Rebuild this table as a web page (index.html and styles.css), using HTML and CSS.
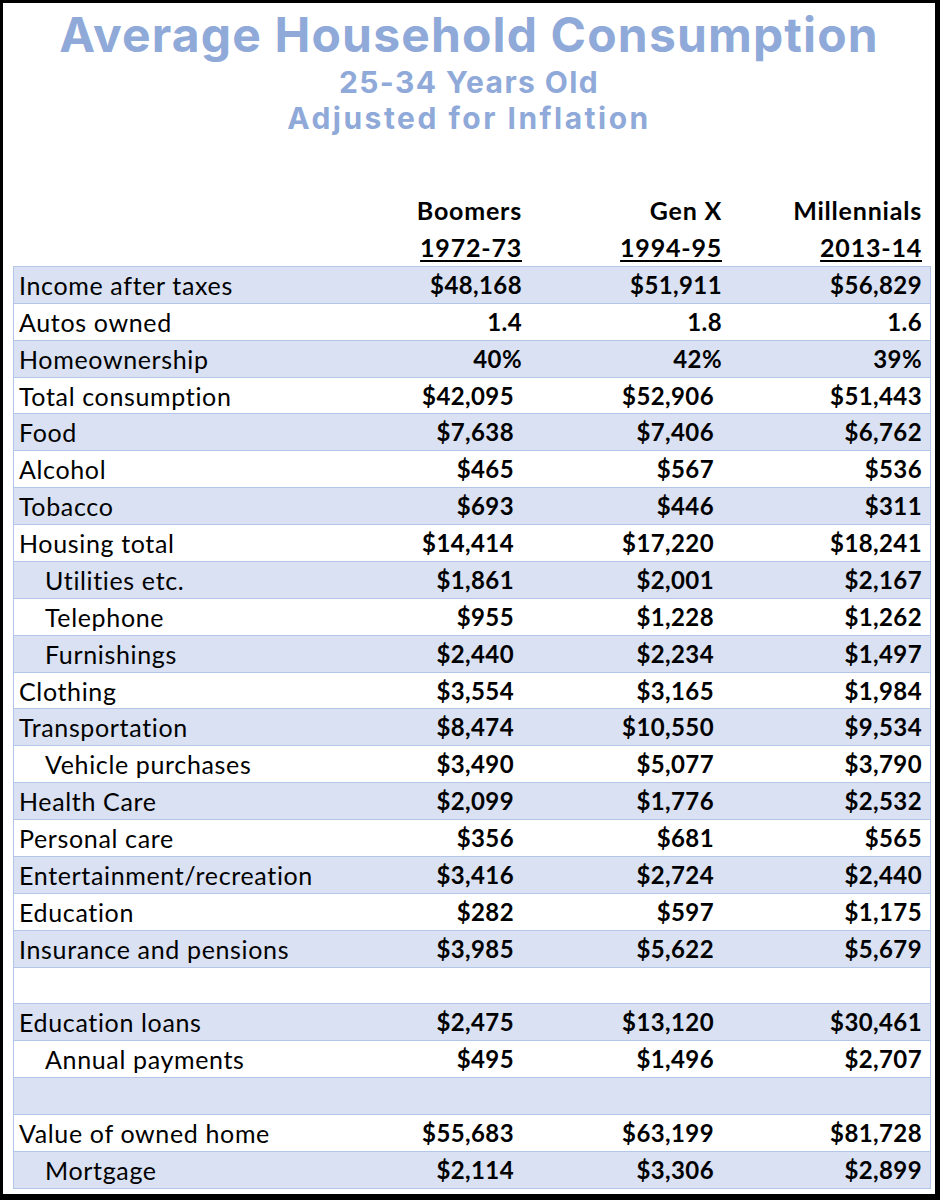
FILE: index.html
```html
<!DOCTYPE html>
<html>
<head>
<meta charset="utf-8">
<link rel="stylesheet" href="styles.css">
</head>
<body>
<div class="frame">
  <div class="titles">
    <div class="t1">Average Household Consumption</div>
    <div class="t2">25-34 Years Old</div>
    <div class="t3">Adjusted for Inflation</div>
  </div>
  <div class="heads">
    <div class="hrow">
      <div></div><div class="h">Boomers</div><div class="h">Gen X</div><div class="h">Millennials</div>
    </div>
    <div class="hrow">
      <div></div><div class="h u">1972-73</div><div class="h u">1994-95</div><div class="h u">2013-14</div>
    </div>
  </div>
  <div class="tbl">
    <div class="row b"><div class="l">Income after taxes</div><div class="v">$48,168</div><div class="v">$51,911</div><div class="v">$56,829</div></div>
    <div class="row"><div class="l">Autos owned</div><div class="v">1.4</div><div class="v">1.8</div><div class="v">1.6</div></div>
    <div class="row b"><div class="l">Homeownership</div><div class="v">40%</div><div class="v">42%</div><div class="v">39%</div></div>
    <div class="row a"><div class="l">Total consumption</div><div class="v">$42,095</div><div class="v">$52,906</div><div class="v">$51,443</div></div>
    <div class="row a b"><div class="l">Food</div><div class="v">$7,638</div><div class="v">$7,406</div><div class="v">$6,762</div></div>
    <div class="row a"><div class="l">Alcohol</div><div class="v">$465</div><div class="v">$567</div><div class="v">$536</div></div>
    <div class="row a b"><div class="l">Tobacco</div><div class="v">$693</div><div class="v">$446</div><div class="v">$311</div></div>
    <div class="row a"><div class="l">Housing total</div><div class="v">$14,414</div><div class="v">$17,220</div><div class="v">$18,241</div></div>
    <div class="row a b"><div class="l i">Utilities etc.</div><div class="v">$1,861</div><div class="v">$2,001</div><div class="v">$2,167</div></div>
    <div class="row a"><div class="l i">Telephone</div><div class="v">$955</div><div class="v">$1,228</div><div class="v">$1,262</div></div>
    <div class="row a b"><div class="l i">Furnishings</div><div class="v">$2,440</div><div class="v">$2,234</div><div class="v">$1,497</div></div>
    <div class="row a"><div class="l">Clothing</div><div class="v">$3,554</div><div class="v">$3,165</div><div class="v">$1,984</div></div>
    <div class="row a b"><div class="l">Transportation</div><div class="v">$8,474</div><div class="v">$10,550</div><div class="v">$9,534</div></div>
    <div class="row a"><div class="l i">Vehicle purchases</div><div class="v">$3,490</div><div class="v">$5,077</div><div class="v">$3,790</div></div>
    <div class="row a b"><div class="l">Health Care</div><div class="v">$2,099</div><div class="v">$1,776</div><div class="v">$2,532</div></div>
    <div class="row a"><div class="l">Personal care</div><div class="v">$356</div><div class="v">$681</div><div class="v">$565</div></div>
    <div class="row a b"><div class="l">Entertainment/recreation</div><div class="v">$3,416</div><div class="v">$2,724</div><div class="v">$2,440</div></div>
    <div class="row a"><div class="l">Education</div><div class="v">$282</div><div class="v">$597</div><div class="v">$1,175</div></div>
    <div class="row a b"><div class="l">Insurance and pensions</div><div class="v">$3,985</div><div class="v">$5,622</div><div class="v">$5,679</div></div>
    <div class="row a"><div class="l"></div><div class="v"></div><div class="v"></div><div class="v"></div></div>
    <div class="row a b"><div class="l">Education loans</div><div class="v">$2,475</div><div class="v">$13,120</div><div class="v">$30,461</div></div>
    <div class="row a"><div class="l i">Annual payments</div><div class="v">$495</div><div class="v">$1,496</div><div class="v">$2,707</div></div>
    <div class="row a b"><div class="l"></div><div class="v"></div><div class="v"></div><div class="v"></div></div>
    <div class="row a"><div class="l">Value of owned home</div><div class="v">$55,683</div><div class="v">$63,199</div><div class="v">$81,728</div></div>
    <div class="row a b"><div class="l i">Mortgage</div><div class="v">$2,114</div><div class="v">$3,306</div><div class="v">$2,899</div></div>
  </div>
</div>
</body>
</html>
```
FILE: styles.css
```css
html, body {
  margin: 0;
  padding: 0;
  background: #000;
}
.frame {
  box-sizing: border-box;
  width: 940px;
  height: 1200px;
  background: #fff;
  border-style: solid;
  border-color: #000;
  border-width: 3px 5px 6px 3px;
  padding: 0 0 0 10px;
  font-family: Lato, "Liberation Sans", sans-serif;
  color: #000;
}
.titles {
  text-align: center;
  color: #8fa9d9;
  font-family: Inter, "Liberation Sans", sans-serif;
  font-weight: 700;
  margin-left: -10px;
  padding-top: 3px;
}
.t1 {
  font-size: 48px;
  line-height: 58px;
  letter-spacing: 1.15px;
}
.t2 {
  font-size: 30px;
  line-height: 36.3px;
  letter-spacing: 1.4px;
}
.t3 {
  font-size: 30px;
  line-height: 36.3px;
  letter-spacing: 2.5px;
}
.heads {
  margin-top: 55.6px;
  width: 918px;
}
.hrow, .row {
  display: grid;
  grid-template-columns: 316px 200px 200px 200px;
  line-height: 36px;
}
.hrow {
  height: 36.88px;
  padding: 0 1px;
}
.h {
  font-size: 25px;
  font-weight: 700;
  text-align: right;
  padding-right: 8px;
  letter-spacing: 0.8px;
}
.u {
  text-decoration: underline;
  text-decoration-thickness: 2px;
  text-underline-offset: 3px;
}
.tbl {
  width: 918px;
  box-sizing: border-box;
  border: 1px solid #b4c6e7;
  border-bottom: none;
}
.row {
  box-sizing: border-box;
  height: 36.88px;
  border-bottom: 1px solid #b4c6e7;
}
.row.b {
  background: #d9e1f2;
}
.l {
  font-size: 25px;
  letter-spacing: 0.65px;
  padding-left: 5px;
  white-space: nowrap;
}
.l.i {
  padding-left: 31px;
}
.v {
  font-size: 24px;
  letter-spacing: 0.4px;
  font-weight: 700;
  text-align: right;
  padding-right: 8px;
}
.row.a .v:nth-child(2),
.row.a .v:nth-child(3) {
  padding-right: 16px;
}
```
